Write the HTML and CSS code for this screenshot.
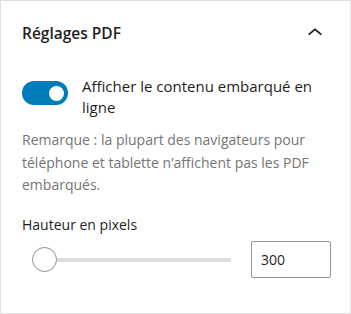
FILE: index.html
```html
<!DOCTYPE html>
<html lang="fr">
<head>
<meta charset="utf-8">
<link rel="stylesheet" href="styles.css">
</head>
<body>
<div class="panel">
  <div class="header">
    <h2 class="title">Réglages PDF</h2>
    <svg class="chevron" width="16" height="10" viewBox="0 0 16 10"><path d="M1.6 7.6L8 2.4l6.4 5.2" fill="none" stroke="#1e1e1e" stroke-width="1.8"/></svg>
  </div>
  <div class="toggle-row">
    <span class="toggle"><span class="knob"></span></span>
    <span class="toggle-label">Afficher le contenu embarqué en ligne</span>
  </div>
  <p class="help">Remarque : la plupart des navigateurs pour téléphone et tablette n’affichent pas les PDF embarqués.</p>
  <div class="range-label">Hauteur en pixels</div>
  <div class="range-row">
    <div class="slider"><span class="track"></span><span class="thumb"></span></div>
    <div class="num">300</div>
  </div>
</div>
</body>
</html>
```
FILE: styles.css
```css
html, body { margin: 0; padding: 0; background: #fff; }
body { font-family: "Open Sans", "Noto Sans", sans-serif; color: #1e1e1e; }
.panel {
  box-sizing: border-box;
  width: 351px;
  height: 314px;
  border: 1px solid #e0e0e0;
  padding: 0 19px 0 21px;
}
.header {
  display: flex;
  align-items: center;
  justify-content: space-between;
  height: 64px;
}
.title { margin: 0; font-size: 15.5px; font-weight: 600; }
.chevron { margin-right: 8px; margin-top: -3px; }
.toggle-row { display: flex; align-items: flex-start; gap: 14px; margin-top: 11px; }
.toggle {
  flex: none;
  width: 46px; height: 24px; border-radius: 12px;
  background: #007cba; position: relative; margin-top: 5px;
}
.knob { position: absolute; right: 4px; top: 4.5px; width: 15px; height: 15px; border-radius: 50%; background: #fff; }
.toggle-label { font-size: 15px; line-height: 20.5px; }
.help { margin: 12px 0 0; font-size: 14px; line-height: 22.5px; color: #757575; }
.range-label { margin-top: 18px; font-size: 14px; line-height: 20px; }
.range-row { display: flex; align-items: center; gap: 20px; margin-top: 6px; }
.slider { position: relative; width: 209px; height: 37px; }
.track { position: absolute; left: 30px; right: 0; top: 17px; height: 4px; background: #dcdcde; }
.thumb { position: absolute; left: 10px; top: 6px; width: 25px; height: 25px; box-sizing: border-box; border: 1px solid #8c8f94; border-radius: 50%; background: #fff; }
.num {
  box-sizing: border-box; width: 80px; height: 37px;
  border: 1px solid #949494; border-radius: 2px;
  padding: 0 9px; font-size: 14px; line-height: 35px;
}
```
